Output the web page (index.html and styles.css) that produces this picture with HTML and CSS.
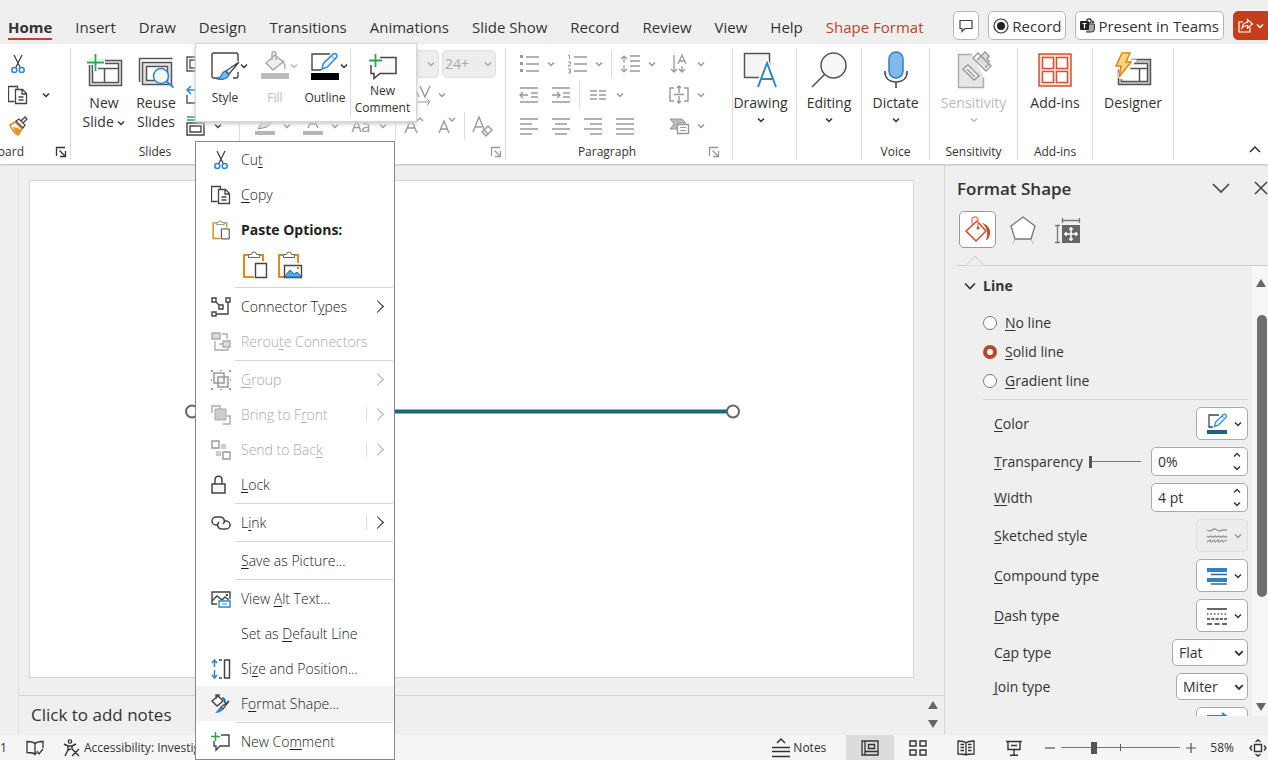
FILE: index.html
```
<!DOCTYPE html>
<html lang="en">
<head>
  <meta charset="UTF-8">
  <meta name="viewport" content="width=device-width, initial-scale=1.0">
  <title>Presentation Editor</title>
  <link rel="stylesheet" href="styles.css">
</head>
<body>
  <!-- Shared icons -->
  <svg class="defs" aria-hidden="true">
    <symbol id="chev" viewBox="0 0 8 8"><path d="M1 2.5l3 3 3-3" fill="none" stroke="currentColor" stroke-width="1.5"/></symbol>
    <symbol id="chev-up" viewBox="0 0 8 8"><path d="M1 5.5l3-3 3 3" fill="none" stroke="currentColor" stroke-width="1.3"/></symbol>
    <symbol id="launcher" viewBox="0 0 12 12"><path d="M1.5 10V1.5H10M4.500 4.500l5 5M10.500 5v5.500H5" fill="none" stroke="currentColor" stroke-width="1.3"/></symbol>
    <symbol id="cut" viewBox="0 0 20 20"><path d="M6 1l6.500 13M14 1L7.500 14" fill="none" stroke="#444" stroke-width="1.3"/><circle cx="6.300" cy="16" r="2.500" fill="none" stroke="#2b88d8" stroke-width="1.500"/><circle cx="13.700" cy="16" r="2.500" fill="none" stroke="#2b88d8" stroke-width="1.500"/></symbol>
    <symbol id="copy" viewBox="0 0 20 20"><path d="M6.500 16.500h-6v-15h9V4M7.500 4.500h7l4 4v10h-11zM14 4.500V9h4.500M10.500 12h5M10.500 15h5" fill="none" stroke="#444" stroke-width="1.3"/></symbol>
    <symbol id="paste" viewBox="0 0 26 28"><path d="M6 4H2v22h10M17 4h4v6" fill="none" stroke="#e08a1e" stroke-width="2"/><path d="M6.500 6.500v-3h3a2.500 2.500 0 0 1 5 0h3v3z" fill="#fff" stroke="#666"/><path d="M13.500 12.500h11v14h-11z" fill="#fff" stroke="#444" stroke-width="1.4"/></symbol>
    <symbol id="comment-add" viewBox="0 0 30 28"><path d="M12 5.500h16v16H12l-6 5v-5H3V13" fill="#fafafa" stroke="#444" stroke-width="1.5"/><path d="M7.500 2v13M1 8.500h13" stroke="#fff" stroke-width="4"/><path d="M7.500 2v13M1 8.500h13" stroke="#2da44e" stroke-width="1.800"/></symbol>
    <symbol id="pencil" viewBox="0 0 20 20"><path d="M2 18l1.500-6L14 2c2-1.500 5 1 3.500 3.500L7.500 16z" fill="#eaf4fc" stroke="#2b88d8" stroke-width="1.500"/><path d="M12 4l4 4M2 18l4-1.500" stroke="#2b88d8"/></symbol>
  </svg>

  <header class="tabs">
    <nav class="tab-list">
      <a href="#" class="active">Home</a>
      <a href="#">Insert</a>
      <a href="#">Draw</a>
      <a href="#">Design</a>
      <a href="#">Transitions</a>
      <a href="#">Animations</a>
      <a href="#">Slide Show</a>
      <a href="#">Record</a>
      <a href="#">Review</a>
      <a href="#">View</a>
      <a href="#">Help</a>
      <a href="#" class="contextual">Shape Format</a>
    </nav>
    <div class="tab-actions">
      <button class="action" aria-label="Comments"><svg width="14" height="14" viewBox="0 0 14 14"><path d="M1 1.500h12v8H6l-3 3v-3H1z" fill="none" stroke="#444" stroke-width="1.200"/></svg></button>
      <button class="action"><svg width="16" height="16" viewBox="0 0 16 16"><circle cx="8" cy="8" r="7" fill="none" stroke="#333" stroke-width="1.200"/><circle cx="8" cy="8" r="4" fill="#222"/></svg>Record</button>
      <button class="action"><svg width="15" height="15" viewBox="0 0 15 15"><circle cx="9" cy="3" r="2.200" fill="none" stroke="#222" stroke-width="1.200"/><circle cx="13" cy="4" r="1.300" fill="#444"/><path d="M9 6h5.500v5a3 3 0 0 1-3 3H6" fill="#aaa" stroke="#333"/><rect y="3" width="9" height="9" rx="1" fill="#222"/><path d="M2.500 5.500h4M4.500 5.500v5" stroke="#fff" stroke-width="1.200"/></svg>Present in Teams</button>
      <button class="action share" aria-label="Share"><svg width="15" height="15" viewBox="0 0 15 15"><path d="M5 4H1v10h11V9.500M4 10c.5-4 3-5.500 5.500-5.500V1.500l5 4.500-5 4V7.500C7 7.500 5.500 8 4 10z" fill="none" stroke="#fff" stroke-width="1.200"/></svg><svg width="8" height="8"><use href="#chev"/></svg></button>
    </div>
  </header>

  <section class="ribbon">
    <div class="group clipboard">
      <div class="rows">
        <div class="row"><button class="icon" aria-label="Cut"><svg width="20" height="20"><use href="#cut"/></svg></button></div>
        <div class="row"><button class="icon" aria-label="Copy"><svg width="20" height="20"><use href="#copy"/></svg></button><button class="drop" aria-label="Copy options"><svg width="8" height="8"><use href="#chev"/></svg></button></div>
        <div class="row"><button class="icon" aria-label="Format painter"><svg width="20" height="20" viewBox="0 0 20 20"><path d="M2 9l5-3 7 7-4 6c-3-1-6-5-8-10z" fill="#fff" stroke="#e08a1e" stroke-width="1.500"/><path d="M5 11c2 0 6 1 8 3l-3 5c-2-1-4-4-5-8z" fill="#e8952b"/><path d="M8 5l3-2 6 6-2 3zM13 5l4-4 2 2-4 4" fill="#fff" stroke="#444" stroke-width="1.300"/></svg></button></div>
      </div>
      <div class="caption"><span>Clipboard</span><svg width="12" height="12"><use href="#launcher"/></svg></div>
    </div>

    <div class="group slides">
      <div class="big-row">
        <button class="big"><svg width="38" height="36" viewBox="0 0 38 36"><path d="M4.500 8.500h32v25h-32z" fill="#e4e4e4" stroke="#555" stroke-width="1.500"/><path d="M7.500 11.500h26v19h-26zM7.500 16.500h26M19.500 16.500v14" fill="#fff" stroke="#555" stroke-width="1.500"/><path d="M10.500 1v18M1 10.500h19" stroke="#fff" stroke-width="5"/><path d="M10.500 2v17M2 10.500h17" stroke="#2da44e" stroke-width="1.800"/></svg><span>New<br>Slide <svg width="8" height="8"><use href="#chev"/></svg></span></button>
        <button class="big"><svg width="38" height="36" viewBox="0 0 38 36"><path d="M2.500 30V6.500h33" fill="none" stroke="#555" stroke-width="1.500"/><path d="M5.500 10.500h29v22h-29z" fill="#e4e4e4" stroke="#555" stroke-width="1.500"/><path d="M9.500 14.500h21v14h-21z" fill="#fff" stroke="#555" stroke-width="1.500"/><circle cx="24" cy="24" r="7.500" fill="#f2f8fd" stroke="#2b88d8" stroke-width="1.600"/><path d="M29.500 29.500l7 6" stroke="#2b88d8" stroke-width="1.800"/></svg><span>Reuse<br>Slides</span></button>
        <div class="rows">
          <div class="row"><button class="icon" aria-label="Layout"><svg width="20" height="20" viewBox="0 0 20 20"><path d="M1 3h18v14H1zM4 6h12v8H4z" fill="none" stroke="#555" stroke-width="1.400"/></svg></button></div>
          <div class="row"><button class="icon" aria-label="Reset"><svg width="20" height="20" viewBox="0 0 20 20"><path d="M1 10v8h17V8h-5" fill="none" stroke="#555" stroke-width="1.400"/><path d="M1 5h10M5 1L1 5l4 4" fill="none" stroke="#2b88d8" stroke-width="1.500"/></svg></button></div>
          <div class="row"><button class="icon" aria-label="Section"><svg width="20" height="20" viewBox="0 0 20 20"><path d="M1 1h18M1 4h18" stroke="#2da44e" stroke-width="1.500"/><path d="M1 7h17v12H1zM4 10h11v6H4z" fill="none" stroke="#444" stroke-width="1.400"/></svg></button><button class="drop" aria-label="Section options"><svg width="8" height="8"><use href="#chev"/></svg></button></div>
        </div>
      </div>
      <div class="caption"><span>Slides</span></div>
    </div>

    <div class="group font disabled">
      <div class="rows">
        <div class="row selects">
          <span class="choice font-name"><select aria-label="Font" disabled><option></option></select><svg width="8" height="8"><use href="#chev"/></svg></span>
          <span class="choice font-size"><select aria-label="Font size" disabled><option>24+</option></select><svg width="8" height="8"><use href="#chev"/></svg></span>
        </div>
        <div class="row end"><button class="icon" aria-label="Character spacing" disabled><svg width="24" height="22" viewBox="0 0 24 22"><path d="M1 13L6 2l5 11M3 9h6M12 2l5 11 5-11" fill="none" stroke="currentColor" stroke-width="1.400"/><path d="M2 18h20M19 15l3 3-3 3" fill="none" stroke="currentColor"/></svg></button><button class="drop" aria-label="Spacing options" disabled><svg width="8" height="8"><use href="#chev"/></svg></button></div>
        <div class="row">
          <button class="icon" aria-label="Highlight" disabled><svg width="22" height="20" viewBox="0 0 22 20"><path d="M1 15h20v4H1z" fill="#b5b5b5"/><path d="M4 13l4-7L15 1l4 4-6 6z" fill="#ddd" stroke="currentColor"/></svg></button><button class="drop" aria-label="Highlight options" disabled><svg width="8" height="8"><use href="#chev"/></svg></button>
          <button class="icon" aria-label="Font color" disabled><svg width="22" height="20" viewBox="0 0 22 20"><path d="M1 15h20v4H1z" fill="#b5b5b5"/><path d="M6 12l5-11 5 11M8 8h6" fill="none" stroke="currentColor" stroke-width="1.400"/></svg></button><button class="drop" aria-label="Color options" disabled><svg width="8" height="8"><use href="#chev"/></svg></button>
          <button class="icon case" disabled>Aa</button><button class="drop" aria-label="Case options" disabled><svg width="8" height="8"><use href="#chev"/></svg></button>
          <i class="sep"></i>
          <button class="icon" aria-label="Grow font" disabled><svg width="22" height="20" viewBox="0 0 22 20"><path d="M2 17L8 3l6 14M4 12h8M14 5l3-3 3 3" fill="none" stroke="currentColor" stroke-width="1.400"/></svg></button>
          <button class="icon" aria-label="Shrink font" disabled><svg width="22" height="20" viewBox="0 0 22 20"><path d="M4 17L9 5l5 12M6 13h6M14 2l3 3 3-3" fill="none" stroke="currentColor" stroke-width="1.400"/></svg></button>
          <i class="sep"></i>
          <button class="icon" aria-label="Clear formatting" disabled><svg width="22" height="22" viewBox="0 0 22 22"><path d="M1 17L7 2l5 12M3 12h7M10 17l6-6 4 4-6 6zM12 15l4 4" fill="none" stroke="currentColor" stroke-width="1.400"/></svg></button>
        </div>
      </div>
      <div class="caption"><span></span><svg width="12" height="12"><use href="#launcher"/></svg></div>
    </div>

    <div class="group paragraph disabled">
      <div class="split">
        <div class="rows">
          <div class="row">
            <button class="icon" aria-label="Bullets" disabled><svg width="20" height="20" viewBox="0 0 20 20"><path d="M7 3h13M7 10h13M7 17h13" stroke="currentColor" stroke-width="1.400"/><path d="M1 1h3v3H1zM1 8h3v3H1zM1 15h3v3H1z" fill="currentColor"/></svg></button><button class="drop" aria-label="Bullet options" disabled><svg width="8" height="8"><use href="#chev"/></svg></button>
            <button class="icon" aria-label="Numbering" disabled><svg width="20" height="20" viewBox="0 0 20 20"><path d="M7 3h13M7 10h13M7 17h13" stroke="currentColor" stroke-width="1.400"/><path d="M1 2l1.500-1v4M1 8h2.500v2L1 12h3M1 15h2.500v2H2h1.500v2H1" fill="none" stroke="currentColor"/></svg></button><button class="drop" aria-label="Numbering options" disabled><svg width="8" height="8"><use href="#chev"/></svg></button>
            <i class="sep"></i>
            <button class="icon" aria-label="Line spacing" disabled><svg width="20" height="20" viewBox="0 0 20 20"><path d="M10 2h10M10 7h10M10 12h10M10 17h10" stroke="currentColor" stroke-width="1.400"/><path d="M4 9V2M1 5l3-3 3 3M4 11v7M1 15l3 3 3-3" fill="none" stroke="currentColor" stroke-width="1.200"/></svg></button><button class="drop" aria-label="Spacing options" disabled><svg width="8" height="8"><use href="#chev"/></svg></button>
          </div>
          <div class="row">
            <button class="icon" aria-label="Decrease indent" disabled><svg width="20" height="20" viewBox="0 0 20 20"><path d="M1 3h18M12 8h7M12 12h7M1 17h18M9 10H1M4 7l-3 3 3 3" fill="none" stroke="currentColor" stroke-width="1.400"/></svg></button>
            <button class="icon" aria-label="Increase indent" disabled><svg width="20" height="20" viewBox="0 0 20 20"><path d="M1 3h18M12 8h7M12 12h7M1 17h18M1 10h8M6 7l3 3-3 3" fill="none" stroke="currentColor" stroke-width="1.400"/></svg></button>
            <i class="sep"></i>
            <button class="icon" aria-label="Columns" disabled><svg width="16" height="12" viewBox="0 0 16 12"><path d="M0 2h7M0 6h7M0 10h7M9 2h7M9 6h7M9 10h7" stroke="currentColor" stroke-width="1.300"/></svg></button><button class="drop" aria-label="Column options" disabled><svg width="8" height="8"><use href="#chev"/></svg></button>
          </div>
          <div class="row">
            <button class="icon" aria-label="Align left" disabled><svg width="20" height="20" viewBox="0 0 20 20"><path d="M1 3h18M1 8h12M1 13h18M1 18h12" stroke="currentColor" stroke-width="1.400"/></svg></button>
            <button class="icon" aria-label="Center" disabled><svg width="20" height="20" viewBox="0 0 20 20"><path d="M1 3h18M4 8h12M1 13h18M4 18h12" stroke="currentColor" stroke-width="1.400"/></svg></button>
            <button class="icon" aria-label="Align right" disabled><svg width="20" height="20" viewBox="0 0 20 20"><path d="M1 3h18M7 8h12M1 13h18M7 18h12" stroke="currentColor" stroke-width="1.400"/></svg></button>
            <button class="icon" aria-label="Justify" disabled><svg width="20" height="20" viewBox="0 0 20 20"><path d="M1 3h18M1 8h18M1 13h18M1 18h18" stroke="currentColor" stroke-width="1.400"/></svg></button>
          </div>
        </div>
        <div class="rows">
          <div class="row"><button class="icon" aria-label="Text direction" disabled><svg width="20" height="20" viewBox="0 0 20 20"><path d="M5 1v17M2 15l3 3 3-3M13 12v6M10 15l3 3 3-3M9 10l4-9 4 9M10 7h6" fill="none" stroke="currentColor" stroke-width="1.300"/></svg></button><button class="drop" aria-label="Direction options" disabled><svg width="8" height="8"><use href="#chev"/></svg></button></div>
          <div class="row"><button class="icon" aria-label="Align text" disabled><svg width="20" height="20" viewBox="0 0 20 20"><path d="M5 3H1v13h4M15 3h4v13h-4M5 9.500h10M10 8V1M8 3l2-2 2 2M10 11v7M8 16l2 2 2-2" fill="none" stroke="currentColor" stroke-width="1.400"/></svg></button><button class="drop" aria-label="Align options" disabled><svg width="8" height="8"><use href="#chev"/></svg></button></div>
          <div class="row"><button class="icon" aria-label="Convert to SmartArt" disabled><svg width="20" height="20" viewBox="0 0 20 20"><path d="M1 3h12l4 4H9v6H1l4-5z" fill="#bbb" stroke="currentColor"/><path d="M8.500 8.500h11v9h-11z" fill="#fff" stroke="currentColor" stroke-width="1.300"/><path d="M11 11.500h6M11 14.500h6" stroke="currentColor"/></svg></button><button class="drop" aria-label="SmartArt options" disabled><svg width="8" height="8"><use href="#chev"/></svg></button></div>
        </div>
      </div>
      <div class="caption"><span>Paragraph</span><svg width="12" height="12"><use href="#launcher"/></svg></div>
    </div>

    <div class="group drawing">
      <button class="big"><svg width="36" height="36" viewBox="0 0 36 36"><path d="M1.500 1.500h25v24h-25z" fill="#f5f5f5" stroke="#555" stroke-width="1.500"/><path d="M15 35l9-24 9 24" fill="#fff" stroke="#fff" stroke-width="5"/><path d="M15 35l9-24 9 24M18 27h12" fill="none" stroke="#2b88c8" stroke-width="2"/></svg><span>Drawing</span><svg width="8" height="8"><use href="#chev"/></svg></button>
    </div>
    <div class="group editing">
      <button class="big"><svg width="36" height="36" viewBox="0 0 36 36"><circle cx="22.500" cy="13.500" r="12.500" fill="#f8f8f8" stroke="#555" stroke-width="1.500"/><path d="M13.500 22.500L1 35" stroke="#555" stroke-width="1.600"/></svg><span>Editing</span><svg width="8" height="8"><use href="#chev"/></svg></button>
    </div>
    <div class="group voice">
      <button class="big"><svg width="26" height="38" viewBox="0 0 26 38"><rect x="6" y="1" width="14" height="26" rx="7" fill="#83b9ea" stroke="#2f7fc4" stroke-width="1.500"/><path d="M2 20v1c0 6 4 10 11 10s11-4 11-10v-1M13 31v6" fill="none" stroke="#555" stroke-width="1.700"/></svg><span>Dictate</span><svg width="8" height="8"><use href="#chev"/></svg></button>
      <div class="caption"><span>Voice</span></div>
    </div>
    <div class="group sensitivity">
      <button class="big" disabled><svg width="34" height="36" viewBox="0 0 34 36"><path d="M15 2.500H1.500v33h25V25" fill="#e6e6e6" stroke="#aaa" stroke-width="1.400"/><path d="M26.500 26L15 2.500" stroke="#e6e6e6"/><path d="M6 17l5-4 11 11-5 4zM10 17l8 8" fill="#f2f2f2" stroke="#999" stroke-width="1.400"/><path d="M15 7l5-5 13 13-5 5z" transform="translate(1 -1)" fill="#fff" stroke="#999" stroke-width="1.400"/><path d="M20 8l4-4 8 8-4 4M24 4l4-4 4 4-2 3 3 3" fill="#ddd" stroke="#999" stroke-width="1.400"/></svg><span>Sensitivity</span><svg width="8" height="8"><use href="#chev"/></svg></button>
      <div class="caption"><span>Sensitivity</span></div>
    </div>
    <div class="group addins">
      <button class="big"><svg width="34" height="36" viewBox="0 0 34 36"><path d="M1 2h32v32H1z" fill="#fbe3da" stroke="#d35230" stroke-width="1.500"/><path d="M4.500 5.500h11v11h-11zM18.500 5.500h11v11h-11zM4.500 19.500h11v11h-11zM18.500 19.500h11v11h-11z" fill="#fff" stroke="#d35230" stroke-width="1.500"/></svg><span>Add-ins</span></button>
      <div class="caption"><span>Add-ins</span></div>
    </div>
    <div class="group designer">
      <button class="big"><svg width="38" height="36" viewBox="0 0 38 36"><path d="M4.500 7.500h32v25h-32z" fill="#ccc" stroke="#555" stroke-width="1.500"/><path d="M7.500 11.500h26v18h-26zM7.500 16.500h26M25.500 16.500v13" fill="#fff" stroke="#555" stroke-width="1.500"/><path d="M8 1h9l-4 9h5L6 26l2-11H2z" fill="#ffd779" stroke="#fff" stroke-width="5"/><path d="M8 1h8l-4 9h5L5 25l2-11H2z" fill="#ffd779" stroke="#dd8419" stroke-width="1.500"/></svg><span>Designer</span></button>
    </div>
    <button class="collapse" aria-label="Collapse ribbon"><svg width="14" height="14" viewBox="0 0 14 14"><path d="M2 10l5-5 5 5" fill="none" stroke="#333" stroke-width="1.500"/></svg></button>
  </section>

  <main class="workspace">
    <div class="thumbs"></div>
    <div class="editor">
      <div class="canvas">
        <div class="slide">
          <svg viewBox="0 0 883 496" preserveAspectRatio="none">
            <path d="M162 230.500h541" stroke="#19667f" stroke-width="4"/>
            <circle cx="162" cy="230.500" r="6" fill="#fff" stroke="#666" stroke-width="2"/>
            <circle cx="703" cy="230.500" r="6" fill="#fff" stroke="#666" stroke-width="2"/>
          </svg>
        </div>
      </div>
      <div class="notes">
        <span>Click to add notes</span>
        <div class="notes-scroll">
          <svg width="12" height="10" viewBox="0 0 12 10"><path d="M6 1l5 8H1z" fill="#666"/></svg>
          <svg width="12" height="10" viewBox="0 0 12 10"><path d="M6 9l5-8H1z" fill="#666"/></svg>
        </div>
      </div>
    </div>

    <aside class="panel">
      <div class="panel-head">
        <h2>Format Shape</h2>
        <button aria-label="Pane options"><svg width="18" height="12" viewBox="0 0 18 12"><path d="M1 2l8 8 8-8" fill="none" stroke="#444" stroke-width="1.600"/></svg></button>
        <button aria-label="Close"><svg width="14" height="14" viewBox="0 0 14 14"><path d="M1 1l12 12M13 1L1 13" stroke="#444" stroke-width="1.500"/></svg></button>
      </div>
      <div class="panel-tabs">
        <button class="selected" aria-label="Fill and line"><svg width="28" height="28" viewBox="0 0 28 28"><path d="M2 15L13 5l9 10-10 10z" fill="#fff" stroke="#cf4a25" stroke-width="1.500"/><path d="M8 9V4c0-4 6-4 6 0v8" fill="none" stroke="#e08a70" stroke-width="1.400"/><circle cx="14" cy="12" r="1.500" fill="#cf4a25"/><path d="M18 7c5 1 9 6 8 11-1 4-2 6-4 6 2-5 2-12-4-17z" fill="#cf4a25"/></svg></button>
        <button aria-label="Effects"><svg width="28" height="28" viewBox="0 0 28 28"><path d="M14 1l12 9-4 13H6L2 10z" fill="#fff" stroke="#777" stroke-width="1.300"/><path d="M6 23l-2 5M22 23l2 5" stroke="#bbb"/></svg></button>
        <button aria-label="Size and properties"><svg width="28" height="28" viewBox="0 0 28 28"><path d="M8 9h18v18H8z" fill="#666"/><path d="M17 11v14M10 18h14M15 13h4M15 23h4M12 16v4M22 16v4" stroke="#fff" stroke-width="1.500"/><path d="M8 4.500h18M8.500 2v5M25.500 2v5M3.500 9v18M1 9.500h5M1 26.500h5" stroke="#777" stroke-width="1.300"/></svg></button>
      </div>
      <svg class="notch" width="20" height="11" viewBox="0 0 20 11"><path d="M0 10.500h1L10 1l9 9.500h1" fill="#efefef" stroke="#ccc"/></svg>
      <div class="panel-body">
        <form class="options">
          <h3><svg width="12" height="12" viewBox="0 0 12 12"><path d="M1 3.500l5 5 5-5" fill="none" stroke="#333" stroke-width="1.600"/></svg>Line</h3>
          <div class="radios">
            <label><input type="radio" name="line"><span><u>N</u>o line</span></label>
            <label><input type="radio" name="line" checked><span><u>S</u>olid line</span></label>
            <label><input type="radio" name="line"><span><u>G</u>radient line</span></label>
          </div>
          <div class="field"><label for="color"><u>C</u>olor</label>
            <button type="button" id="color" class="picker"><svg width="22" height="22" viewBox="0 0 22 22"><path d="M13 2H3v12h4" fill="none" stroke="#444" stroke-width="1.300"/><path d="M1 17h20v4H1z" fill="#1a6480"/><use href="#pencil" x="7" y="0" width="15" height="15"/></svg><svg width="8" height="8"><use href="#chev"/></svg></button></div>
          <div class="field"><label for="transparency"><u>T</u>ransparency</label>
            <input type="range" min="0" max="100" value="0" aria-label="Transparency slider">
            <span class="spin"><input type="text" id="transparency" value="0%"><span class="steps"><button type="button" aria-label="More"><svg width="8" height="8"><use href="#chev-up"/></svg></button><button type="button" aria-label="Less"><svg width="8" height="8"><use href="#chev"/></svg></button></span></span></div>
          <div class="field"><label for="width"><u>W</u>idth</label>
            <span class="spin"><input type="text" id="width" value="4 pt"><span class="steps"><button type="button" aria-label="More"><svg width="8" height="8"><use href="#chev-up"/></svg></button><button type="button" aria-label="Less"><svg width="8" height="8"><use href="#chev"/></svg></button></span></span></div>
          <div class="field"><label for="sketched"><u>S</u>ketched style</label>
            <button type="button" id="sketched" class="picker" disabled><svg width="22" height="16" viewBox="0 0 22 16"><path d="M1 2q3 2 5 0t5 0 5 0h5M1 8q2 2 4 0 2 2 4 0 2 2 4 0 2 2 4 0 2 2 4 0M1 14l3-2 1 2 3-2 1 2 3-2 1 2 3-2 1 2 4-2" fill="none" stroke="#999" stroke-width="1.300"/></svg><svg width="8" height="8"><use href="#chev"/></svg></button></div>
          <div class="field"><label for="compound"><u>C</u>ompound type</label>
            <button type="button" id="compound" class="picker"><svg width="22" height="18" viewBox="0 0 22 18"><path d="M1 3h20M1 13h20" stroke="#2b84c0" stroke-width="4"/><path d="M5 7.500h16M5 17h16" stroke="#2b6a94" stroke-width="1.500"/></svg><svg width="8" height="8"><use href="#chev"/></svg></button></div>
          <div class="field"><label for="dash"><u>D</u>ash type</label>
            <button type="button" id="dash" class="picker"><svg width="22" height="18" viewBox="0 0 22 18"><path d="M1 2h20" stroke="#333" stroke-width="1.500"/><path d="M1 7h20" stroke="#555" stroke-width="1.500" stroke-dasharray="1.500 2"/><path d="M1 12h20" stroke="#333" stroke-width="1.500" stroke-dasharray="3 1.300"/><path d="M1 17h20" stroke="#333" stroke-width="1.500" stroke-dasharray="5 2.500"/></svg><svg width="8" height="8"><use href="#chev"/></svg></button></div>
          <div class="field"><label for="cap">C<u>a</u>p type</label>
            <span class="choice"><select id="cap"><option>Flat</option><option>Round</option></select><svg width="10" height="10"><use href="#chev"/></svg></span></div>
          <div class="field"><label for="join"><u>J</u>oin type</label>
            <span class="choice"><select id="join"><option>Miter</option><option>Bevel</option></select><svg width="10" height="10"><use href="#chev"/></svg></span></div>
          <div class="field"><span></span>
            <button type="button" class="picker" aria-label="Begin arrow type"><svg width="22" height="24" viewBox="0 0 22 24"><path d="M1 4h19M16 1l4 3-4 3" fill="none" stroke="#2b84c0" stroke-width="2"/></svg></button></div>
        </form>
        <div class="scroll">
          <svg width="12" height="10" viewBox="0 0 12 10"><path d="M6 1l5 8H1z" fill="#666"/></svg>
          <div class="scroll-thumb"></div>
          <svg width="12" height="10" viewBox="0 0 12 10"><path d="M6 9l5-8H1z" fill="#666"/></svg>
        </div>
      </div>
    </aside>
  </main>

  <footer class="status">
    <div class="status-left">
      <span>1</span>
      <button aria-label="Spelling"><svg width="18" height="16" viewBox="0 0 18 16"><path d="M9 14V4C8 2 5 1.500 1 1.500v11c4 0 7 0 8 2 .5-1 1-1.500 2-2M9 4c1-2 4-2.500 8-2.500V8M11 11l2 3 4-5" fill="none" stroke="#333" stroke-width="1.300"/></svg></button>
      <button><svg width="17" height="18" viewBox="0 0 17 18"><circle cx="7" cy="2.500" r="1.700" fill="none" stroke="#333" stroke-width="1.200"/><path d="M1 5l4 2v4l-3 6M13 5L9 7v3M5 11l3-1M5 7h4M9 10l7 7M16 10l-7 7" fill="none" stroke="#333" stroke-width="1.400"/></svg>Accessibility: Investigate</button>
    </div>
    <div class="status-right">
      <button class="notes-btn"><svg width="20" height="20" viewBox="0 0 20 20"><path d="M6 5l4-4 4 4" fill="none" stroke="#333" stroke-width="1.500"/><path d="M1 9.500h18M1 13.500h18M1 18.500h18" stroke="#333" stroke-width="1.300"/></svg>Notes</button>
      <button class="view current" aria-label="Normal"><svg width="18" height="16" viewBox="0 0 18 16"><path d="M1 1h16v14H1zM4 1v14M4 11.500h13M7.500 4.500h6v4h-6z" fill="none" stroke="#333" stroke-width="1.300"/></svg></button>
      <button class="view" aria-label="Slide sorter"><svg width="18" height="16" viewBox="0 0 18 16"><path d="M1 1h6v5H1zM11 1h6v5h-6zM1 10h6v5H1zM11 10h6v5h-6z" fill="none" stroke="#333" stroke-width="1.400"/></svg></button>
      <button class="view" aria-label="Reading view"><svg width="18" height="16" viewBox="0 0 18 16"><path d="M9 15V3C7 1 4 1 1 1v13c3 0 6 0 8 1 2-1 5-1 8-1V1c-3 0-6 0-8 2M3.500 4.500H7M3.500 7.500H7M3.500 10.500H7M11 4.500h3.500M11 7.500h3.500M11 10.500h3.500" fill="none" stroke="#333" stroke-width="1.300"/></svg></button>
      <button class="view" aria-label="Slide show"><svg width="18" height="16" viewBox="0 0 18 16"><path d="M1 1.500h16M3 1.500v8h12v-8M6 5.500h6M9 9.500V15M5 15.300h8" fill="none" stroke="#333" stroke-width="1.400"/></svg></button>
      <div class="zoom">
        <button aria-label="Zoom out"><svg width="10" height="10" viewBox="0 0 10 10"><path d="M0 5h10" stroke="#555" stroke-width="1.200"/></svg></button>
        <input type="range" min="0" max="100" value="26" aria-label="Zoom">
        <button aria-label="Zoom in"><svg width="10" height="10" viewBox="0 0 10 10"><path d="M0 5h10M5 0v10" stroke="#555" stroke-width="1.200"/></svg></button>
        <span class="percent">58%</span>
      </div>
      <button class="fit" aria-label="Fit to window"><svg width="18" height="18" viewBox="0 0 18 18"><path d="M5.500 5.500h7v7h-7zM6.500 3L9 1l2.500 2M6.500 15L9 17l2.500-2M3 6.500L1 9l2 2.500M15 6.500L17 9l-2 2.500" fill="none" stroke="#333" stroke-width="1.400"/></svg></button>
    </div>
  </footer>

  <!-- Floating mini toolbar -->
  <div class="mini">
    <button><span class="mini-icon"><svg width="30" height="30" viewBox="0 0 30 30"><path d="M12 27H4q-2 0-2-2V4q0-2 2-2h22q2 0 2 2v6M28 21v4q0 2-2 2h-3" fill="none" stroke="#444" stroke-width="1.400"/><path d="M29 11L19 23l-3-3z" fill="#fff" stroke="#444" stroke-width="1.300"/><path d="M15 20l4 4c-2 4-7 5-11 4 4-2 3-6 7-8z" fill="#7cb9f0" stroke="#2b78c8" stroke-width="1.300"/></svg><svg width="8" height="8"><use href="#chev"/></svg></span>Style</button>
    <button disabled><span class="mini-icon"><svg width="30" height="30" viewBox="0 0 30 30"><path d="M1 22h28v6H1z" fill="#bbb"/><path d="M6 12l9-8 8 7-10 8zM12 9V2q2-3 4 0v7M21 9q4 1 4 9" fill="#eee" stroke="#aaa" stroke-width="1.400"/></svg><svg width="8" height="8"><use href="#chev"/></svg></span>Fill</button>
    <button><span class="mini-icon"><svg width="30" height="30" viewBox="0 0 30 30"><path d="M20 3H2v16h9" fill="none" stroke="#444" stroke-width="1.400"/><path d="M1 22h28v7H1z" fill="#000"/><use href="#pencil" x="10" y="1" width="19" height="19"/></svg><svg width="8" height="8"><use href="#chev"/></svg></span>Outline</button>
    <button class="mini-comment"><svg width="30" height="28"><use href="#comment-add"/></svg><span>New<br>Comment</span></button>
  </div>

  <!-- Right-click menu -->
  <div class="menu">
    <button><svg width="20" height="20"><use href="#cut"/></svg><span>Cu<u>t</u></span></button>
    <button><svg width="20" height="20"><use href="#copy"/></svg><span><u>C</u>opy</span></button>
    <div class="menu-title"><svg width="20" height="20"><use href="#paste"/></svg><span>Paste Options:</span></div>
    <div class="paste-row">
      <button aria-label="Keep source formatting"><svg width="26" height="28"><use href="#paste"/></svg></button>
      <button aria-label="Paste as picture"><svg width="26" height="28" viewBox="0 0 26 28"><path d="M6 4H2v22h5M17 4h4v8" fill="none" stroke="#e08a1e" stroke-width="2"/><path d="M6.500 6.500v-3h3a2.500 2.500 0 0 1 5 0h3v3z" fill="#fff" stroke="#666"/><path d="M7.500 14.500h17v12h-17z" fill="#fff" stroke="#444" stroke-width="1.400"/><path d="M8 25l5-6 4 4 3-2 4 4v1H8z" fill="#55a5e8" stroke="#2370b0"/><path d="M20 16h2v2h-2z" fill="#e07b39"/></svg></button>
    </div>
    <hr>
    <button><svg width="20" height="20" viewBox="0 0 20 20"><path d="M1 1h4v4H1zM1 15h4v4H1zM15 1h4v4h-4zM8 8h4v4H8zM5 5l3 3M5 17h12V5" fill="none" stroke="#444" stroke-width="1.400"/></svg><span>Connector T<u>y</u>pes</span><i class="arrow"></i></button>
    <button disabled><svg width="20" height="20" viewBox="0 0 20 20"><path d="M1 1h8v6H1zM12 9h7v6h-7z" fill="#ddd" stroke="#aaa" stroke-width="1.400"/><path d="M11 2h5v5M4 9v9h13v-2M8 12h4" fill="none" stroke="#aaa" stroke-width="1.300"/></svg><span>Rerou<u>t</u>e Connectors</span></button>
    <hr>
    <button disabled><svg width="20" height="20" viewBox="0 0 20 20"><path d="M3 3h10v10H3zM7 7h10v10H7z" fill="#eee" fill-opacity=".5" stroke="#999" stroke-width="1.500"/><path d="M0 0h2v2H0zM18 0h2v2h-2zM0 18h2v2H0zM18 18h2v2h-2zM9 0h2v1H9zM9 19h2v1H9zM0 9h1v2H0zM19 9h1v2h-1z" fill="#999"/></svg><span><u>G</u>roup</span><i class="arrow"></i></button>
    <button disabled class="splitted"><svg width="20" height="20" viewBox="0 0 20 20"><path d="M1 8V1h8v3M12 19h7v-8h-3" fill="none" stroke="#aaa" stroke-width="1.400"/><path d="M4 4h11v11H4z" fill="#ccc" stroke="#aaa"/></svg><span>Bring to F<u>r</u>ont</span><i class="arrow"></i></button>
    <button disabled class="splitted"><svg width="20" height="20" viewBox="0 0 20 20"><path d="M10 4h5v5h-5zM5 11h5v5H5z" fill="#ccc"/><path d="M1 1h7v7H1zM12 12h7v7h-7z" fill="#fff" stroke="#999" stroke-width="1.400"/></svg><span>Send to Bac<u>k</u></span><i class="arrow"></i></button>
    <button><svg width="20" height="20" viewBox="0 0 20 20"><path d="M1 9h13v9H1z" fill="#f5f5f5" stroke="#444" stroke-width="1.500"/><path d="M4 9V5c0-5 7-5 7 0v4" fill="none" stroke="#444" stroke-width="1.500"/></svg><span><u>L</u>ock</span></button>
    <hr>
    <button class="splitted"><svg width="20" height="20" viewBox="0 0 20 20"><path d="M7 12H5a4 4 0 0 1 0-8h4a4 4 0 0 1 3 7M13 8h2a4 4 0 0 1 0 8h-4a4 4 0 0 1-3-7" fill="none" stroke="#444" stroke-width="1.500"/></svg><span>L<u>i</u>nk</span><i class="arrow"></i></button>
    <hr>
    <button><svg width="20" height="20"></svg><span><u>S</u>ave as Picture...</span></button>
    <hr>
    <button><svg width="20" height="20" viewBox="0 0 20 20"><path d="M6 15H1V3h18v7M1 12l5-5 5 4 3-3 4 3" fill="none" stroke="#444" stroke-width="1.400"/><path d="M15 5h2v2h-2z" fill="#444"/><path d="M8 12h11v6H8z" fill="#fff" stroke="#2b88d8" stroke-width="1.400"/><path d="M11 15h5" stroke="#2b88d8"/></svg><span>View <u>A</u>lt Text...</span></button>
    <button><svg width="20" height="20"></svg><span>Set as <u>D</u>efault Line</span></button>
    <button><svg width="20" height="20" viewBox="0 0 20 20"><path d="M3.500 8V1M1 4l2.500-3L6 4M3.500 11v8M1 16l2.500 3L6 16" fill="none" stroke="#2b88d8" stroke-width="1.500"/><path d="M8 1h3M8 19h3M13.500 1h5v18h-5z" fill="none" stroke="#444" stroke-width="1.500"/></svg><span>Si<u>z</u>e and Position...</span></button>
    <button class="hover"><svg width="20" height="20" viewBox="0 0 20 20"><path d="M1 7l6-5 5 5-6 5zM5 5V1h3v3" fill="#fff" stroke="#444" stroke-width="1.400"/><path d="M11 4c2 0 3 2 3 5" fill="none" stroke="#2370b0" stroke-width="2"/><path d="M18 7l-6 8-2-2z" fill="#fff" stroke="#444" stroke-width="1.300"/><path d="M10 13l2 2c-1 3-5 4-8 4 3-2 3-5 6-6z" fill="#2b88d8"/></svg><span>F<u>o</u>rmat Shape...</span></button>
    <hr>
    <button><svg width="20" height="20" viewBox="0 0 20 20"><path d="M10 3h8v11h-9l-4 4v-4H3V9" fill="none" stroke="#444" stroke-width="1.400"/><path d="M4.500 0v9M0 4.500h9" stroke="#2da44e" stroke-width="1.500"/></svg><span>New Co<u>m</u>ment</span></button>
  </div>
</body>
</html>
```
FILE: styles.css
```
* {
  box-sizing: border-box;
}

body {
  margin: 0;
  height: 100vh;
  display: flex;
  flex-direction: column;
  position: relative;
  overflow: hidden;
  background: #efefef;
  color: #333;
  font-family: "Open Sans", "Noto Sans", sans-serif;
  font-size: 14px;
}

button, input, select {
  font: inherit;
  color: inherit;
}

button {
  padding: 0;
  border: 0;
  background: none;
}

svg {
  flex: none;
  overflow: visible;
}

u {
  text-underline-offset: 2px;
}

.defs {
  position: absolute;
  width: 0;
  height: 0;
}

/* Tab strip */
.tabs {
  display: flex;
  justify-content: space-between;
  height: 44px;
  padding: 11px 0 4px 8px;
}

.tab-list {
  display: flex;
  gap: 23px;
  font-size: 15px;
  line-height: 32px;
  white-space: nowrap;
}

.tab-list a {
  height: 29px;
  color: #333;
  text-decoration: none;
}

.tab-list .active {
  font-weight: 700;
  border-bottom: 2px solid #b7472a;
}

.tab-list .contextual {
  color: #b7472a;
}

.tab-actions {
  display: flex;
  gap: 9px;
  font-size: 15px;
}

.action {
  display: flex;
  align-items: center;
  justify-content: center;
  gap: 3px;
  min-width: 26px;
  height: 29px;
  padding: 0 4px;
  border: 1px solid #b5b5b5;
  border-radius: 5px;
  background: #fff;
  white-space: nowrap;
}

.action.share {
  width: 35px;
  border-color: #c43e1c;
  border-radius: 5px 0 0 5px;
  background: #c43e1c;
  color: #fff;
}

/* Drop-down with its own arrow */
.choice {
  display: flex;
  align-items: center;
  position: relative;
}

.choice select {
  appearance: none;
  min-width: 72px;
  height: 27px;
  padding: 0 25px 0 6px;
  border: 1px solid #aaa;
  border-radius: 5px;
  background: #fff;
}

.choice svg {
  position: absolute;
  right: 4px;
  pointer-events: none;
}

/* Ribbon */
.ribbon {
  display: flex;
  height: 120px;
  padding: 4px 0;
  background: #fff;
  box-shadow: 0 1px 2px #bbb;
  flex: none;
}

.group {
  display: flex;
  flex-direction: column;
  border-right: 1px solid #dcdcdc;
  flex: none;
}

.clipboard { width: 71px; overflow: hidden; }
.slides { width: 169px; }
.font { width: 266px; }
.paragraph { width: 227px; }
.drawing { width: 64px; padding-right: 8px; }
.editing { width: 65px; }
.voice { width: 68px; }
.sensitivity { width: 88px; }
.addins { width: 75px; }
.designer { width: 81px; }

.disabled .icon,
.disabled .drop {
  color: #999;
}

.row {
  display: flex;
  align-items: center;
  height: 31px;
  gap: 4px;
}

.icon {
  display: flex;
  justify-content: center;
  align-items: center;
  width: 28px;
  height: 26px;
}

.icon.case {
  font-size: 16px;
}

.drop {
  display: flex;
  justify-content: center;
  width: 16px;
  margin-left: -4px;
}

.sep {
  width: 1px;
  height: 28px;
  background: #dcdcdc;
}

.clipboard .row {
  padding-left: 4px;
  gap: 10px;
}

.font .row {
  padding-left: 11px;
}

.font .row.end {
  justify-content: flex-end;
  padding-right: 55px;
}

.font .row.selects {
  gap: 3px;
  padding: 0 9px 0 8px;
}

.font .font-name {
  flex: 1;
}

.font .font-size {
  width: 54px;
}

.font select {
  width: 100%;
  min-width: 0;
  height: 28px;
  padding: 0 12px 0 2px;
  border-color: #ddd;
  background: #ededed;
  color: #aaa;
  opacity: 1;
}

.font .choice svg {
  color: #aaa;
}

.paragraph .split {
  display: flex;
  justify-content: space-between;
  padding: 0 23px 0 9px;
}

.big-row {
  display: flex;
  padding-left: 7px;
}

.big-row .big {
  width: 52px;
}

.big {
  display: flex;
  flex-direction: column;
  align-items: center;
  width: 100%;
  height: 93px;
  padding-top: 3px;
  line-height: 19px;
}

.big > svg:first-child {
  height: 38px;
}

.big > span {
  margin: 4px 0;
}

.big:disabled {
  color: #bbb;
}

.caption {
  display: flex;
  align-items: center;
  height: 16px;
  margin-top: auto;
  font-size: 12px;
  line-height: 16px;
}

.caption span {
  flex: 1;
  text-align: center;
}

.caption svg {
  margin-right: 3px;
}

.clipboard .caption {
  justify-content: flex-end;
  gap: 31px;
}

.clipboard .caption span {
  flex: none;
}

.paragraph .caption {
  padding-right: 9px;
}

.disabled .caption svg {
  color: #999;
}

.collapse {
  align-self: flex-end;
  margin: 0 6px 0 auto;
}

/* Workspace */
.workspace {
  display: flex;
  flex: 1;
  min-height: 0;
}

.thumbs {
  width: 19px;
  margin-top: 4px;
  border-right: 1px solid #ddd;
}

.editor {
  display: flex;
  flex-direction: column;
  flex: 1;
}

.canvas {
  display: flex;
  flex: 1;
  min-height: 0;
  padding: 16px 30px 17px 10px;
}

.slide {
  flex: 1;
  border: 1px solid #d5d5d5;
  background: #fff;
}

.slide svg {
  display: block;
  width: 100%;
  height: 100%;
}

.notes {
  display: flex;
  align-items: center;
  justify-content: space-between;
  height: 40px;
  padding: 0 5px 2px 12px;
  border-top: 1px solid #d5d5d5;
  font-size: 17px;
}

.notes-scroll {
  display: flex;
  flex-direction: column;
  gap: 9px;
}

/* Format pane */
.panel {
  display: flex;
  flex-direction: column;
  width: 324px;
  padding: 9px 0 19px 12px;
  border-left: 1px solid #d5d5d5;
}

.panel-head {
  display: flex;
  align-items: center;
  height: 30px;
  gap: 24px;
}

.panel-head h2 {
  flex: 1;
  margin: 0;
  font-size: 17px;
  font-weight: 600;
}

.panel-head button {
  display: flex;
}

.panel-tabs {
  display: flex;
  gap: 8px;
  height: 63px;
  padding: 8px 0 0 2px;
  border-bottom: 1px solid #ccc;
}

.panel-tabs button {
  display: flex;
  align-items: center;
  justify-content: center;
  width: 37px;
  height: 37px;
  border: 1px solid transparent;
  border-radius: 5px;
}

.panel-tabs .selected {
  border-color: #999;
  background: #fff;
}

.notch {
  margin: -11px 0 0 8px;
  position: relative;
}

.panel-body {
  display: flex;
  flex: 1;
  min-height: 0;
}

.options {
  flex: 1;
  display: flex;
  flex-direction: column;
  gap: 7px;
  overflow: hidden;
  padding: 0 4px 0 7px;
}

.options h3 {
  display: flex;
  align-items: center;
  gap: 7px;
  margin: 9px 0 0;
  font-size: 14px;
  line-height: 22px;
  font-weight: 700;
}

.radios {
  margin: 4px 0 0 19px;
  padding-bottom: 4px;
  border-bottom: 1px solid #d5d5d5;
}

.radios label {
  display: flex;
  align-items: center;
  gap: 8px;
  height: 29px;
}

.radios input {
  appearance: none;
  width: 14px;
  height: 14px;
  margin: 0;
  border: 1px solid #777;
  border-radius: 50%;
  background: #fff;
}

.radios input:checked {
  border: 4px solid #b7472a;
}

.field {
  display: flex;
  align-items: center;
  margin-left: 30px;
  flex: none;
}

.field > :first-child {
  flex: 1;
}

.picker {
  display: flex;
  align-items: center;
  justify-content: space-between;
  width: 52px;
  height: 33px;
  padding: 0 5px 0 9px;
  border: 1px solid #aaa;
  border-radius: 5px;
  background: #fff;
}

.picker:disabled {
  border-color: #ddd;
  background: #ededed;
  color: #999;
}

.field input[type="range"] {
  width: 52px;
  margin: 0 10px 0 0;
}

input[type="range"] {
  appearance: none;
  height: 12px;
  background: linear-gradient(#777, #777) center / 100% 1px no-repeat;
}

input[type="range"]::-webkit-slider-thumb {
  appearance: none;
  width: 3px;
  height: 12px;
  background: #555;
}

.spin {
  display: flex;
  width: 97px;
  height: 29px;
  border: 1px solid #aaa;
  border-radius: 5px;
  background: #fff;
}

.spin input {
  width: 81px;
  padding: 0 6px;
  border: 0;
  background: none;
}

.steps {
  display: flex;
  flex-direction: column;
  justify-content: space-around;
}

.steps button {
  display: flex;
}

.scroll {
  display: flex;
  flex-direction: column;
  align-items: flex-end;
  width: 16px;
  padding: 12px 1px 4px 0;
  background: #f6f6f6;
}

.scroll-thumb {
  width: 10px;
  height: 65%;
  margin: 27px 0 auto;
  border-radius: 5px;
  background: #6e6e6e;
}

/* Status bar */
.status {
  display: flex;
  justify-content: space-between;
  align-items: center;
  height: 25px;
  flex: none;
  background: #f5f5f5;
  font-size: 12px;
}

.status button {
  display: flex;
  align-items: center;
}

.status-left {
  display: flex;
  align-items: center;
  gap: 19px;
}

.status-left button {
  gap: 4px;
}

.status-right {
  display: flex;
  align-items: center;
}

.notes-btn {
  gap: 2px;
  margin-right: 20px;
}

.status .view {
  justify-content: center;
  width: 48px;
  height: 25px;
}

.status .current {
  background: #dcdcdc;
}

.zoom {
  display: flex;
  align-items: center;
  gap: 6px;
  margin-left: 7px;
}

.zoom input {
  width: 119px;
  margin: 0;
  background: linear-gradient(#555, #555) center / 1px 7px no-repeat, linear-gradient(#777, #777) center / 100% 1px no-repeat;
}

.zoom input::-webkit-slider-thumb {
  width: 6px;
}

.percent {
  margin-left: 8px;
}

.fit {
  margin: 0 1px 0 15px;
}

/* Mini toolbar */
.mini {
  position: absolute;
  left: 195px;
  top: 43px;
  display: flex;
  height: 79px;
  padding: 4px 2px 4px 4px;
  border: 1px solid #d5d5d5;
  background: #fff;
  box-shadow: 0 2px 4px #ccc;
  font-size: 12px;
  line-height: 17px;
}

.mini button {
  display: flex;
  flex-direction: column;
  align-items: center;
  width: 50px;
}

.mini button:disabled {
  color: #bbb;
}

.mini-icon {
  display: flex;
  align-items: center;
  width: 100%;
  height: 36px;
  margin-bottom: 5px;
  padding-left: 10px;
}

.mini .mini-comment {
  width: 64px;
  border-left: 1px solid #dcdcdc;
}

.mini-comment svg {
  margin: 4px 0 2px;
}

/* Context menu */
.menu {
  position: absolute;
  left: 195px;
  top: 141px;
  width: 200px;
  border: 1px solid #888;
  background: #fff;
  font-size: 14px;
}

.menu > button,
.menu-title {
  display: flex;
  align-items: center;
  gap: 10px;
  width: 100%;
  height: 35px;
  padding: 0 8px 0 15px;
}

.menu > button {
  font-weight: 300;
  color: #222;
}

.menu > button:disabled {
  color: #aaa;
}

.menu .hover {
  background: #f3f3f3;
}

.menu-title {
  font-weight: 700;
  color: #222;
}

.paste-row {
  display: flex;
  gap: 9px;
  height: 39px;
  padding-left: 46px;
}

.menu hr {
  height: 1px;
  margin: 1px 1px 1px 39px;
  border: 0;
  background: #d5d5d5;
}

.arrow {
  width: 9px;
  height: 9px;
  margin-left: auto;
  margin-right: 4px;
  border: solid currentColor;
  border-width: 1px 1px 0 0;
  transform: rotate(45deg);
}

/* thin divider in front of the arrow */
.splitted {
  background: linear-gradient(#ddd, #ddd) 170px center / 1px 15px no-repeat;
}
```
